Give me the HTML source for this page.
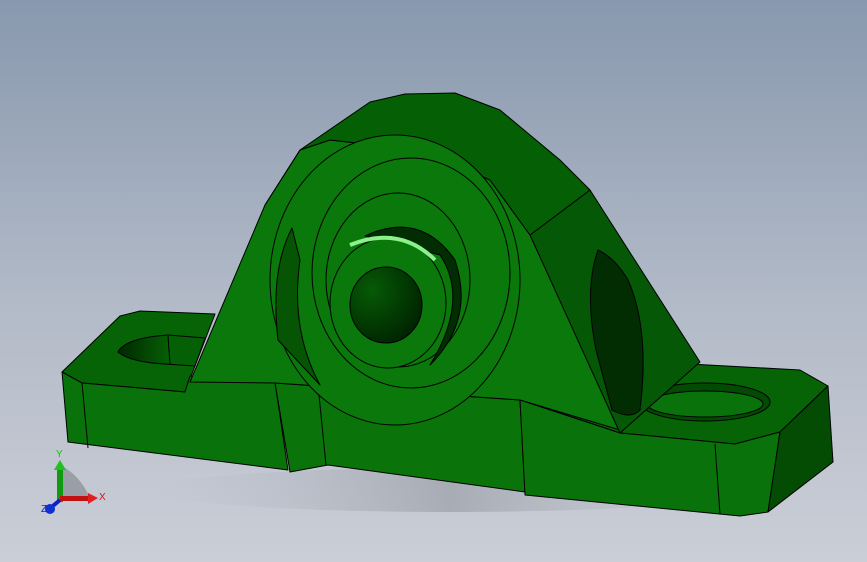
<!DOCTYPE html>
<html><head><style>
html,body{margin:0;padding:0;width:867px;height:562px;overflow:hidden}
body{background:linear-gradient(#8898ae,#b3bbc8 55%,#cbced7)}
svg{position:absolute;left:0;top:0}
</style></head><body>
<svg width="867" height="562" viewBox="0 0 867 562" stroke="#000" stroke-width="1" stroke-linejoin="round">
<defs>
<radialGradient id="hole" cx="0.3" cy="0.3" r="0.8"><stop offset="0" stop-color="#065a06"/><stop offset="1" stop-color="#002200"/></radialGradient>
<linearGradient id="slot" x1="0" x2="1"><stop offset="0" stop-color="#002800"/><stop offset="0.6" stop-color="#056005"/></linearGradient>
<linearGradient id="shad" x1="0" x2="1"><stop offset="0" stop-color="#aeb3bb" stop-opacity="0"/><stop offset="0.5" stop-color="#70757c" stop-opacity="0.35"/><stop offset="1" stop-color="#aeb3bb" stop-opacity="0"/></linearGradient>
</defs>
<ellipse cx="450" cy="490" rx="300" ry="22" fill="url(#shad)" stroke="none"/>
<polygon points="62,372 120,316 140,311 215,314 185,392 82,383" fill="#066406"/>
<path d="M205,338 L168,335 Q125,338 118,352 Q130,362 165,364 L195,366 Z" fill="url(#slot)"/>
<line x1="168" y1="336" x2="170" y2="364"/>
<polygon points="62,372 82,383 185,392 190,376 275,382 288,470 68,442" fill="#0a720a"/>
<line x1="82" y1="383" x2="88" y2="448"/>
<polygon points="275,383 520,400 525,492 328,465 290,472" fill="#0a740a"/>
<line x1="318" y1="385" x2="326" y2="465"/>
<polygon points="515,398 610,376 690,364 800,370 828,386 780,432 735,444 620,433" fill="#066406"/>
<ellipse cx="705" cy="402" rx="65" ry="19" fill="#034a03"/>
<ellipse cx="705" cy="404" rx="58" ry="13" fill="#0a720a"/>
<polygon points="520,400 620,433 735,444 780,432 768,512 740,516 525,495" fill="#0a720a"/>
<line x1="715" y1="444" x2="720" y2="514"/>
<polygon points="780,432 828,386 833,462 768,512" fill="#044c04"/>
<polygon points="190,382 265,205 300,150 330,140 420,150 490,180 530,235 560,300 620,430 520,400 275,383" fill="#0a780a"/>
<polygon points="530,235 590,190 700,362 620,433" fill="#055805"/>
<path d="M598,250 Q584,290 596,350 L612,410 Q630,420 640,410 Q650,330 628,280 Q615,258 598,250 Z" fill="#022d02"/>
<polygon points="265,205 300,150 370,102 405,94 455,93 500,110 560,160 590,190 530,235 490,180 420,150 330,140 300,150" fill="#056005"/>
<ellipse cx="395" cy="280" rx="125" ry="145" fill="#0a780a"/>
<path d="M292,228 Q270,270 278,340 L320,385 Q290,330 300,260 Z" fill="#055505"/>
<ellipse cx="411" cy="273" rx="99" ry="115" fill="#0a780a"/>
<ellipse cx="398" cy="280" rx="72" ry="87" fill="#0a780a"/>
<path d="M365,236 Q420,210 455,260 Q475,320 430,365 Q470,300 440,255 Z" fill="#022d02"/>
<ellipse cx="388" cy="303" rx="58" ry="65" fill="#0a780a"/>
<path d="M350,245 Q400,225 435,260" fill="none" stroke="#8cf08c" stroke-width="4"/>
<ellipse cx="386" cy="305" rx="36" ry="38" fill="url(#hole)"/>
<g stroke="none">
<path d="M58,500 Q55,470 60,465 Q80,475 90,498 Z" fill="#7d828a" opacity="0.6"/>
<rect x="57" y="467" width="6" height="35" fill="#109a10"/>
<polygon points="54,470 60,460 66,470" fill="#20c020"/>
<rect x="60" y="496" width="30" height="5" fill="#c01010"/>
<polygon points="88,493 98,498 88,504" fill="#e02020"/>
<line x1="60" y1="500" x2="48" y2="510" stroke="#1020c0" stroke-width="4"/>
<circle cx="50" cy="509" r="5" fill="#1030d0"/>
</g>
<text x="56" y="457" font-family="Liberation Sans" font-size="10" fill="#10c010" stroke="none">Y</text>
<text x="99" y="500" font-family="Liberation Sans" font-size="10" fill="#e01010" stroke="none">X</text>
<text x="41" y="512" font-family="Liberation Sans" font-size="10" fill="#1020d0" stroke="none">Z</text>
</svg>
</body></html>
